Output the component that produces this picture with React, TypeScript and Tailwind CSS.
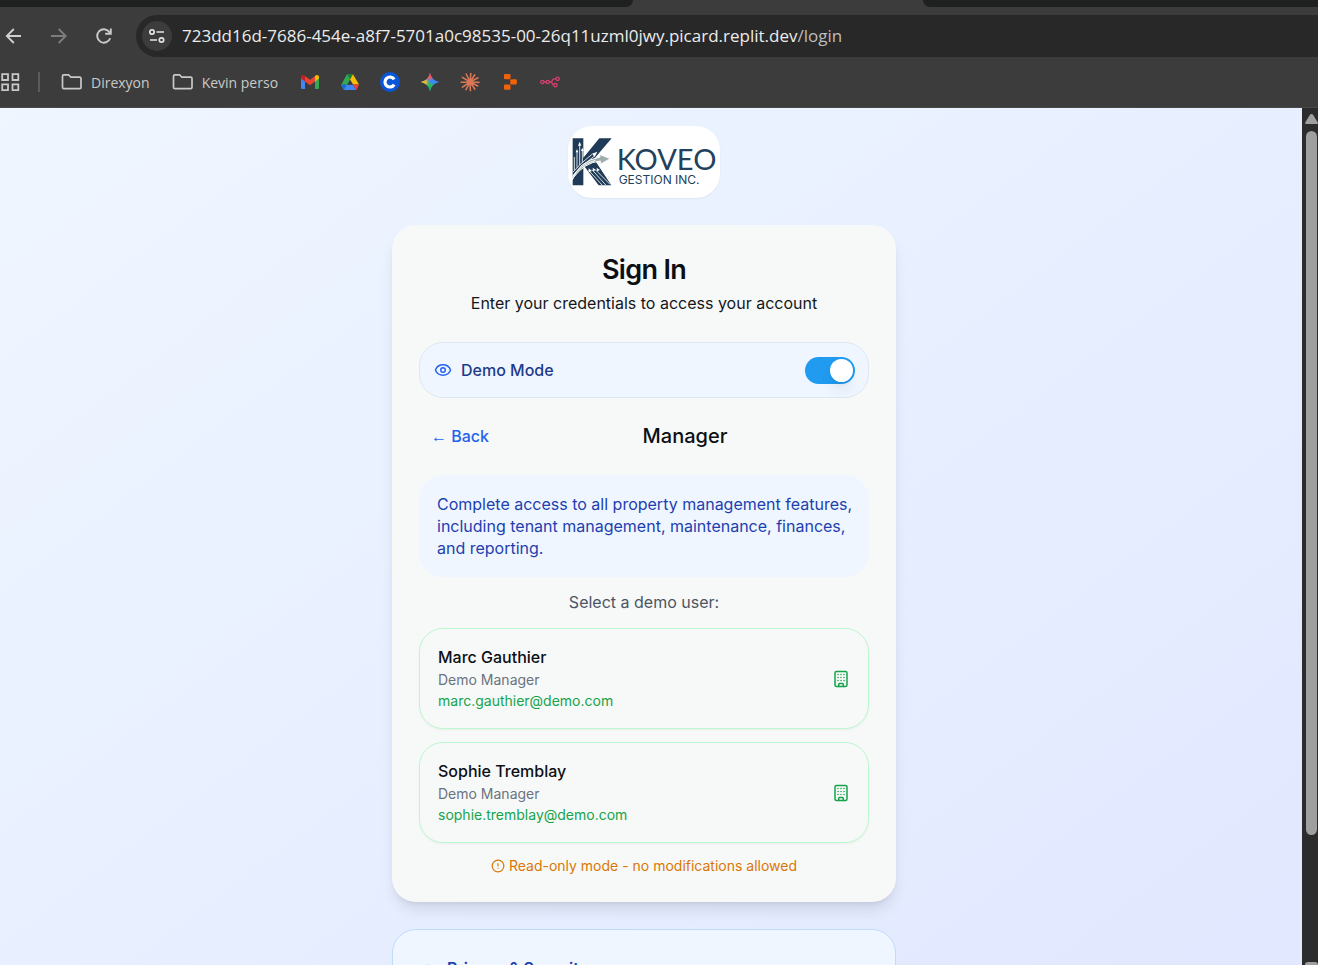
import { useState } from "react";
import { Building, CircleAlert, Eye, Shield } from "lucide-react";

const users = [
  { name: "Marc Gauthier", role: "Demo Manager", email: "marc.gauthier@demo.com" },
  { name: "Sophie Tremblay", role: "Demo Manager", email: "sophie.tremblay@demo.com" },
];

const sparkPath = "M10 .8Q11.500 8.500 19.200 10Q11.500 11.500 10 19.200Q8.500 11.500 .8 10Q8.500 8.500 10 .8Z";

function FolderIcon() {
  return (
    <svg width="22" height="18" viewBox="0 0 22 18" fill="none" stroke="#c9c9c9" strokeWidth="1.700" strokeLinejoin="round" aria-hidden="true">
      <path d="M1.500 3.200Q1.500 1.800 2.900 1.800H7.600L9.800 4.200H18.600Q20 4.200 20 5.600V14.200Q20 15.600 18.600 15.600H2.900Q1.500 15.600 1.500 14.200Z" />
    </svg>
  );
}

function GmailIcon() {
  return (
    <svg width="20" height="20" viewBox="0 0 20 20" aria-hidden="true">
      <path d="M1 6V15.700Q1 17 2.300 17H5V9Z" fill="#4285f4" />
      <path d="M15 9V17H17.700Q19 17 19 15.700V6Z" fill="#34a853" />
      <path d="M1 5.200Q1 3 3 3Q3.900 3 5 4V9.400L1 6.500Z" fill="#c5221f" />
      <path d="M5 4L10 7.800L15 4V9.400L10 13.200L5 9.400Z" fill="#ea4335" />
      <path d="M15 4Q16.100 3 17 3Q19 3 19 5.200V6.500L15 9.400Z" fill="#fbbc04" />
    </svg>
  );
}

function DriveIcon() {
  return (
    <svg width="20" height="20" viewBox="0 0 20 20" aria-hidden="true">
      <path d="M7 2.200H10L10 8L5.500 18L3.300 17.400L1 13Z" fill="#34a853" />
      <path d="M7 2.200L10 7.700L13 2.200Q12.600 1.900 12 1.900H8Q7.400 1.900 7 2.200Z" fill="#188038" />
      <path d="M13 2.200L19 12.500H13L10 7.600Z" fill="#fbbc04" />
      <path d="M1 12.600H7L4 18Q3.500 17.800 3 17Z" fill="#1967d2" />
      <path d="M7 12.600H13L16 18H4Z" fill="#4285f4" />
      <path d="M13 12.600H19L17 17Q16.600 17.800 16 18Z" fill="#ea4335" />
      <path d="M10 7.900L12.900 12.700H7.100Z" fill="#3c3c3c" />
    </svg>
  );
}

function CoinIcon() {
  return (
    <svg width="20" height="20" viewBox="0 0 20 20" aria-hidden="true">
      <circle cx="10" cy="10" r="10" fill="#0a56d8" />
      <path d="M14.200 7.300A5 5 0 1 0 14.200 12.700" fill="none" stroke="#fff" strokeWidth="3.200" />
    </svg>
  );
}

function SparkIcon() {
  return (
    <svg width="20" height="20" viewBox="0 0 20 20" aria-hidden="true">
      <defs>
        <radialGradient id="spark-y" gradientUnits="userSpaceOnUse" cx="1" cy="10" r="8.500">
          <stop offset="0" stopColor="#fbbc04" />
          <stop offset=".6" stopColor="#e8b92a" />
          <stop offset="1" stopColor="#7fb45c" stopOpacity="0" />
        </radialGradient>
        <radialGradient id="spark-r" gradientUnits="userSpaceOnUse" cx="9" cy="1" r="8">
          <stop offset="0" stopColor="#f9413f" />
          <stop offset=".6" stopColor="#ee5a5c" />
          <stop offset="1" stopColor="#ee5a5c" stopOpacity="0" />
        </radialGradient>
        <radialGradient id="spark-g" gradientUnits="userSpaceOnUse" cx="8" cy="18" r="9.500">
          <stop offset="0" stopColor="#10b44c" />
          <stop offset=".6" stopColor="#2fb562" />
          <stop offset="1" stopColor="#2fb562" stopOpacity="0" />
        </radialGradient>
      </defs>
      <path d={sparkPath} fill="#3b89f8" />
      <path d={sparkPath} fill="url(#spark-g)" />
      <path d={sparkPath} fill="url(#spark-y)" />
      <path d={sparkPath} fill="url(#spark-r)" />
    </svg>
  );
}

function BurstIcon() {
  return (
    <svg width="20" height="20" viewBox="0 0 20 20" stroke="#d97757" strokeWidth="1.600" strokeLinecap="round" aria-hidden="true">
      <path d="M10 10L10.800 1.500M10 10L14.800 2.800M10 10L18 5.800M10 10L19 10.400M10 10L17.800 14M10 10L14.900 17.200M10 10L10.400 18.600M10 10L6 17.600M10 10L2.500 15.200M10 10L1.200 10.200M10 10L2.400 5.400M10 10L6.200 2" />
      <circle cx="10" cy="10" r="2.200" fill="#d97757" />
    </svg>
  );
}

function BlocksIcon() {
  return (
    <svg width="20" height="20" viewBox="0 0 20 20" fill="#f26207" aria-hidden="true">
      <rect x="4" y="2" width="6.500" height="5.200" rx="1" />
      <rect x="10.300" y="7.300" width="6.500" height="5.200" rx="1" />
      <rect x="4" y="12.600" width="6.500" height="5.200" rx="1" />
    </svg>
  );
}

function NodesIcon() {
  return (
    <svg width="20" height="20" viewBox="0 0 20 20" fill="none" stroke="#d63f6c" strokeWidth="1.300" aria-hidden="true">
      <circle cx="2.300" cy="10" r="1.600" />
      <circle cx="7.700" cy="10" r="1.600" />
      <circle cx="17.600" cy="6.800" r="1.700" />
      <circle cx="15.400" cy="13.200" r="1.700" />
      <path d="M4 10H6M9.400 10H11.500M15.900 6.800H14Q12.700 6.800 12.300 8.400Q12 10 11 10Q12 10 12.300 11.600Q12.600 13.200 13.700 13.200" />
    </svg>
  );
}

function Browser() {
  return (
    <header className="shrink-0 border-b border-[#484848] bg-[#3c3c3c] font-['Open_Sans','Noto_Sans',sans-serif]">
      <div className="flex h-[7px] justify-between">
        <div className="w-[48%] rounded-br-xl bg-[#1f2120]" />
        <div className="w-[30%] rounded-bl-xl bg-[#1f2120]" />
      </div>
      <div className="flex items-center pt-2">
        <nav aria-label="History" className="flex w-[136px] items-center gap-[25px] pl-1">
          <button aria-label="Go back">
            <svg width="20" height="20" viewBox="0 0 20 20" fill="none" stroke="#d0d0d0" strokeWidth="1.800"><path d="M17 10H3M9.800 3L2.800 10L9.800 17" /></svg>
          </button>
          <button aria-label="Go forward">
            <svg width="20" height="20" viewBox="0 0 20 20" fill="none" stroke="#7d7d7d" strokeWidth="1.800"><path d="M2 10H16.500M9.700 3L16.700 10L9.700 17" /></svg>
          </button>
          <button aria-label="Reload">
            <svg width="20" height="20" viewBox="0 0 20 20" fill="none" stroke="#c9c9c9" strokeWidth="1.900"><path d="M16.200 12.200A6.700 6.700 0 1 1 15.300 6L16.600 7.600M16.800 2.500V7.800H11.200" /></svg>
          </button>
        </nav>
        <div className="flex h-[42px] flex-1 items-center rounded-l-full bg-[#282828] pl-[6px]">
          <button aria-label="Site information" className="flex size-[30px] items-center justify-center rounded-full bg-[#3c3c3c]">
            <svg width="18" height="18" viewBox="0 0 18 18" fill="none" stroke="#e3e3e3" strokeWidth="1.700"><circle cx="4" cy="5" r="2.200" /><circle cx="13.500" cy="13" r="2.200" /><path d="M8.500 5H16M2 13H9" /></svg>
          </button>
          <p className="pl-[10px] text-[17px] whitespace-nowrap text-[#ececec]">
            723dd16d-7686-454e-a8f7-5701a0c98535-00-26q11uzml0jwy.picard.replit.dev<span className="text-[#bdbdbd]">/login</span>
          </p>
        </div>
      </div>
      <nav aria-label="Bookmarks" className="flex h-[50px] items-center text-[#c9c9c9]">
        <button aria-label="Apps">
          <svg width="20" height="20" viewBox="0 0 20 20" fill="none" stroke="#c9c9c9" strokeWidth="1.800"><path d="M2.200 2.200H8V8H2.200ZM12.500 2.200H18.300V8H12.500ZM2.200 12.400H8V18.200H2.200ZM12.500 12.400H18.300V18.200H12.500Z" /></svg>
        </button>
        <div className="ml-[18px] h-5 w-[2px] bg-[#5c5c5c]" />
        <a href="#direxyon" className="ml-5 flex items-center gap-2 pl-px text-[14px]"><FolderIcon />Direxyon</a>
        <a href="#kevin" className="ml-[22px] flex items-center gap-2 text-[14px]"><FolderIcon />Kevin perso</a>
        <div className="ml-[22px] flex items-center gap-5">
          <a href="#mail" aria-label="Mail"><GmailIcon /></a>
          <a href="#drive" aria-label="Drive"><DriveIcon /></a>
          <a href="#c" aria-label="C"><CoinIcon /></a>
          <a href="#gemini" aria-label="Gemini"><SparkIcon /></a>
          <a href="#claude" aria-label="Claude"><BurstIcon /></a>
          <a href="#replit" aria-label="Replit"><BlocksIcon /></a>
          <a href="#n8n" aria-label="n8n"><NodesIcon /></a>
        </div>
      </nav>
    </header>
  );
}

function Logo() {
  return (
    <div className="flex h-[72px] w-[152px] items-center justify-center gap-[5px] rounded-3xl bg-white text-[#23405c] shadow-xs">
      <svg width="40" height="50" viewBox="0 0 120 150" aria-hidden="true">
        <path d="M2 4H34V62L82 4H119L66 66L118 145H80L34 84V145H2Z" fill="#1f3b57" />
        <g fill="none" stroke="#d5dde2" strokeWidth="3">
          <path d="M7 100V60M15 92V44M23 84V24M31 78V40" />
          <path d="M2 116Q30 84 66 58M2 106Q28 76 60 52" />
          <path d="M50 100L92 146M60 98L103 146M70 98L114 142" />
        </g>
        <path d="M23 14L28 26H18ZM15 36L19 46H11ZM31 32L35 42H27ZM76 44L68 60L60 50ZM50 94L60 102L50 106ZM62 92L72 99L63 103ZM74 92L84 99L75 103Z" fill="#fff" />
        <path d="M0 130Q20 72 84 60L82 52L115 65L85 82V72Q38 76 4 122Z" fill="#9eaeab" stroke="#fff" strokeWidth="3" />
        <path d="M0 122Q22 84 70 70" fill="none" stroke="#fff" strokeWidth="3" />
      </svg>
      <div className="flex flex-col pt-[9px]">
        <span className="font-[Lato,sans-serif] text-[29px] leading-[24px]">KOVEO</span>
        <span className="pt-[2px] pl-[2px] font-[Inter,sans-serif] text-[12px] leading-[13px]">GESTION INC.</span>
      </div>
    </div>
  );
}

function UserCard({ name, role, email }: { name: string; role: string; email: string }) {
  return (
    <button className="flex w-full items-center justify-between rounded-3xl border border-[#bbf7d0] px-[18px] py-[17px] text-left shadow-xs">
      <span className="flex flex-col">
        <span className="text-[16px] leading-[23px] font-medium text-[#0c0f14]">{name}</span>
        <span className="text-[14px] leading-[21px] text-[#6b7280]">{role}</span>
        <span className="text-[14px] leading-[21px] text-[#16a34a]">{email}</span>
      </span>
      <Building size={18} className="text-[#16a34a]" />
    </button>
  );
}

export default function App() {
  const [demo, setDemo] = useState(true);
  return (
    <div className="flex h-screen flex-col overflow-hidden">
      <Browser />
      <div className="flex min-h-0 flex-1">
        <main className="flex-1 overflow-hidden font-[Inter,sans-serif]">
          <div className="flex flex-col items-center bg-linear-to-br from-[#eff6ff] to-[#e0e7ff] pt-[18px] pr-[14px] pb-[18px]">
            <Logo />
            <section className="mt-[27px] w-full max-w-[504px] rounded-3xl bg-[#f7f9f8] p-[27px] shadow-lg">
              <h1 className="text-center text-[27px] leading-[36px] font-semibold tracking-tight text-[#0c0f14]">Sign In</h1>
              <p className="mt-1 text-center text-[16px] leading-[23px] text-[#14171c]">Enter your credentials to access your account</p>
              <div className="mt-[27px] flex h-14 items-center justify-between rounded-3xl border border-[#dde8f3] bg-[#eff6ff] pr-[13px] pl-[14px]">
                <label htmlFor="demo" className="flex items-center gap-[9px] text-[16px] font-medium text-[#1e3a8a]">
                  <Eye size={18} className="text-[#2563eb]" />
                  Demo Mode
                </label>
                <input
                  id="demo"
                  type="checkbox"
                  role="switch"
                  checked={demo}
                  onChange={(e) => setDemo(e.target.checked)}
                  className="flex h-[27px] w-[50px] appearance-none items-center rounded-full bg-gray-300 px-[2px] before:block before:size-[23px] before:rounded-full before:bg-white before:shadow-lg checked:justify-end checked:bg-[#209bf0]"
                />
              </div>
              <div className="mt-[18px] flex h-10 items-center">
                <button className="px-3 text-[16px] font-medium text-[#2563eb]">
                  <span className="font-['Liberation_Sans',sans-serif] font-normal">←</span> Back
                </button>
                <h2 className="flex-1 text-center text-[20px] font-medium text-[#0c0f14]">Manager</h2>
              </div>
              <p className="mt-[19px] rounded-3xl bg-[#eff6ff] py-[18px] pr-3 pl-[18px] text-[16px] leading-[22px] text-[#1e40af]">
                Complete access to all property management features, including tenant management, maintenance, finances, and reporting.
              </p>
              <p className="mt-[14px] text-center text-[16px] leading-[22px] text-[#4b5563]">Select a demo user:</p>
              <div className="mt-[15px] flex flex-col gap-[13px]">
                {users.map((u) => (
                  <UserCard key={u.email} {...u} />
                ))}
              </div>
              <p className="mt-[14px] flex items-center justify-center gap-1 text-[14px] leading-[18px] text-[#d97706]">
                <CircleAlert size={14} />
                Read-only mode - no modifications allowed
              </p>
            </section>
            <section className="mt-[27px] flex min-h-[150px] w-full max-w-[504px] items-start gap-[10px] rounded-3xl border border-[#bfdbfe] bg-[#eff6ff] p-[26px]">
              <Shield size={18} className="mt-2 text-[#2563eb]" />
              <h2 className="text-[16px] leading-6 font-semibold text-[#1e40af]">Privacy &amp; Security</h2>
            </section>
          </div>
        </main>
        <div aria-hidden="true" className="flex w-4 flex-col items-center bg-[#2c2c2c] pt-[6px] pl-[3px]">
          <svg width="13" height="10" viewBox="0 0 13 10"><path d="M6.500 0Q7.500 0 8.200 1L12.800 8.500Q13 10 12 10H1Q0 10 .2 8.500L4.800 1Q5.500 0 6.500 0Z" fill="#9f9f9f" /></svg>
          <div className="mt-[7px] w-[11px] flex-1 rounded-full bg-[#9f9f9f]" />
          <div className="mt-[127px] h-[3px] w-[13px] rounded-t-sm bg-[#9f9f9f]" />
        </div>
      </div>
    </div>
  );
}
